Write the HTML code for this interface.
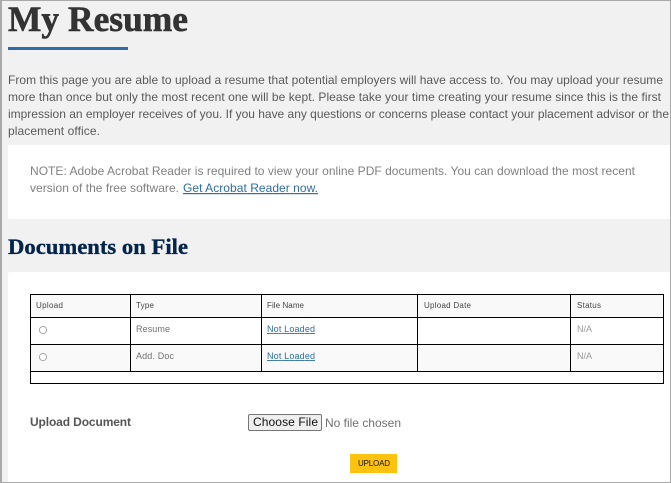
<!DOCTYPE html>
<html><head><meta charset="utf-8">
<style>
html,body{margin:0;padding:0;width:671px;height:483px;overflow:hidden;background:#f1f1f1}
svg{display:block;position:absolute;left:0;top:0}
text{font-family:"Liberation Sans",sans-serif}
.p{font-size:12px;fill:#595959}
.n{font-size:12px;fill:#808080}
.h{font-size:8px;fill:#444}
.c{font-size:9px;fill:#707070}
.l{font-size:9px;fill:#2e6da4;text-decoration:underline}
</style></head>
<body>
<svg width="671" height="483" viewBox="0 0 671 483" xmlns="http://www.w3.org/2000/svg">
<rect width="671" height="483" fill="#f1f1f1"/>
<text x="8" y="31" textLength="180" lengthAdjust="spacingAndGlyphs" style="font-family:'Liberation Serif',serif;font-weight:700;font-size:36px" fill="#333" stroke="#333" stroke-width="0.6">My Resume</text>
<rect x="8" y="47" width="120" height="3" fill="#2e6aa3"/>
<text class="p" x="8" y="84" textLength="655">From this page you are able to upload a resume that potential employers will have access to. You may upload your resume</text>
<text class="p" x="8" y="101" textLength="653">more than once but only the most recent one will be kept. Please take your time creating your resume since this is the first</text>
<text class="p" x="8" y="118" textLength="661">impression an employer receives of you. If you have any questions or concerns please contact your placement advisor or the</text>
<text class="p" x="8" y="135" textLength="92">placement office.</text>
<rect x="8" y="145" width="670" height="74" rx="2" fill="#fff"/>
<text class="n" x="30" y="175" textLength="605">NOTE: Adobe Acrobat Reader is required to view your online PDF documents. You can download the most recent</text>
<text class="n" x="30" y="192" textLength="149">version of the free software.</text>
<text x="183" y="192" textLength="135" style="font-size:12px;text-decoration:underline" fill="#2e6da4">Get Acrobat Reader now.</text>
<text x="8" y="254" textLength="180" lengthAdjust="spacingAndGlyphs" style="font-family:'Liberation Serif',serif;font-weight:700;font-size:22px" fill="#03254c" stroke="#03254c" stroke-width="0.35">Documents on File</text>
<rect x="8" y="272" width="670" height="211" rx="2" fill="#fff"/>
<rect x="30.5" y="294.5" width="633" height="23" fill="#f9f9f9"/>
<rect x="30.5" y="344.5" width="633" height="27" fill="#f9f9f9"/>
<g fill="none" stroke="#000" stroke-width="1">
<rect x="30.5" y="294.5" width="633" height="89"/>
<path d="M30 317.5H664M30 344.5H664M30 371.5H664M130.5 294V372M261.5 294V372M417.5 294V372M570.5 294V372"/>
</g>
<text class="h" x="36" y="308" textLength="27">Upload</text>
<text class="h" x="136" y="308" textLength="18">Type</text>
<text class="h" x="267" y="308" textLength="37">File Name</text>
<text class="h" x="424" y="308" textLength="47">Upload Date</text>
<text class="h" x="577" y="308" textLength="24">Status</text>
<circle cx="43" cy="330" r="3.6" fill="#fff" stroke="#a0a0a0" stroke-width="0.9"/>
<circle cx="43" cy="357" r="3.6" fill="#fff" stroke="#a0a0a0" stroke-width="0.9"/>
<text class="c" x="136" y="332" textLength="34">Resume</text>
<text class="c" x="136" y="359" textLength="38">Add. Doc</text>
<text class="l" x="267" y="332" textLength="48">Not Loaded</text>
<text class="l" x="267" y="359" textLength="48">Not Loaded</text>
<text class="c" x="577" y="332" textLength="15" style="fill:#999">N/A</text>
<text class="c" x="577" y="359" textLength="15" style="fill:#999">N/A</text>
<text x="30" y="426" textLength="101" style="font-size:12px;font-weight:700" fill="#555">Upload Document</text>
<rect x="248.5" y="414.5" width="73" height="16" rx="1.5" fill="#efefef" stroke="#767676"/>
<text x="253" y="426" textLength="65" style="font-size:12px" fill="#111">Choose File</text>
<text x="325" y="427" textLength="76" style="font-size:12px" fill="#707070">No file chosen</text>
<rect x="350" y="454" width="47" height="19" fill="#ffc20e"/>
<text x="358" y="466" textLength="32" style="font-size:8px" fill="#111">UPLOAD</text>
<rect x="0" y="0" width="671" height="1" fill="#a9a9a9"/>
<rect x="0" y="0" width="2" height="483" fill="#a9a9a9"/>
<rect x="670" y="0" width="1" height="483" fill="#a9a9a9"/>
<rect x="0" y="482" width="671" height="1" fill="#a9a9a9"/>
</svg>
</body></html>
